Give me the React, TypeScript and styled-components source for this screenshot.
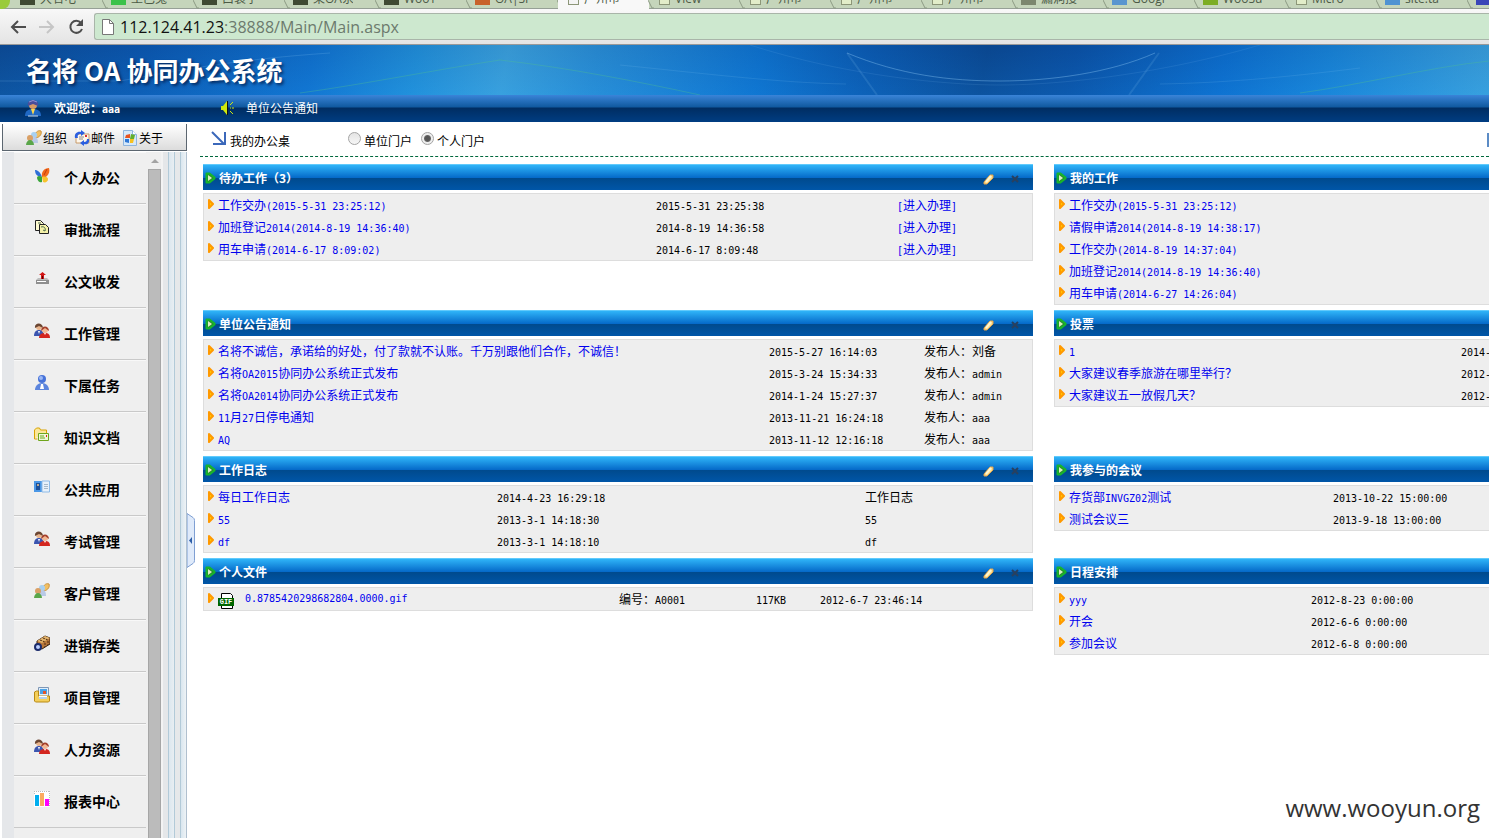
import React from 'react';
import styled, { createGlobalStyle } from 'styled-components';

const CJK = '"Noto Sans CJK SC", sans-serif';
const MONO = '"DejaVu Sans Mono", "Liberation Mono", monospace';

const GlobalStyle = createGlobalStyle`
  * { box-sizing: border-box; }
  body { margin: 0; background: #fff; color: #000; font: 12px/22px ${CJK}; }
  a { color: #00e; text-decoration: none; }
  button { border: 0; padding: 0; background: none; font: inherit; color: inherit; cursor: pointer; }
  svg { display: block; flex: none; }
`;

/* ---------- text with half-width Latin runs ---------- */

const Latin = styled.span`
  font-family: ${MONO};
  font-size: 10px;
  line-height: 1;
  white-space: pre;
`;

const T = ({ children }: { children: string }) => (
  <>
    {children.split(/([\x20-\x7e]+)/).filter(Boolean).map((run, i) =>
      /^[\x20-\x7e]/.test(run) ? <Latin key={i}>{run}</Latin> : run,
    )}
  </>
);

/* ---------- browser chrome ---------- */

const Page = styled.div`
  display: flex;
  flex-direction: column;
  height: 100vh;
  overflow: hidden;
  position: relative;
`;

const TabStrip = styled.div`
  display: flex;
  flex: none;
  height: 9px;
  overflow: hidden;
  background: linear-gradient(#c5d5bb 8px, #96a096 8px);
`;

const TabLead = styled.div`
  flex: none;
  width: 10px;
  height: 9px;
  margin-right: 2px;
  background: #9acb3a;
  border-bottom-right-radius: 8px;
`;

const Tab = styled.div<{ $active?: boolean }>`
  display: flex;
  flex: none;
  align-items: flex-end;
  gap: 5px;
  width: 91px;
  height: 9px;
  padding: 0 0 4px 8px;
  background: ${p => (p.$active ? '#f8f8f8' : 'transparent')};
  color: #4c5a46;
  font: 12px/16px "Open Sans", ${CJK};
  white-space: nowrap;
`;

const TabLabel = styled.span`
  width: 40px;
  margin-bottom: -2px;
  overflow: hidden;
`;

const TabClose = styled.span`
  width: 8px;
  color: #97a48f;
`;

const TabEdge = styled.svg`
  margin: 0 -5px -4px auto;
`;

const Toolbar = styled.div`
  display: flex;
  flex: none;
  align-items: center;
  height: 36px;
  padding: 4px 0 4px 10px;
  gap: 13px;
  background: linear-gradient(#f8f8f8, #e4e4e4);
  border-bottom: 1px solid #999;
`;

const Address = styled.label`
  display: flex;
  flex: 1;
  align-items: center;
  gap: 6px;
  height: 27px;
  margin-left: -3px;
  padding-left: 7px;
  background: #cde8cf;
  border: 1px solid #a9b5a9;
  border-right: 0;
  border-radius: 3px 0 0 3px;
  font: 16px/24px "Open Sans", sans-serif;
  color: #6c7a6d;
`;

const Host = styled.span`
  color: #111;
`;

/* ---------- header ---------- */

const Banner = styled.header`
  position: relative;
  flex: none;
  height: 50px;
  background:
    linear-gradient(rgba(0, 40, 110, 0.12), rgba(20, 140, 235, 0.14)),
    linear-gradient(100deg, #0d4c95 0%, #0c59b0 10%, #1173cf 21%, #2392da 28%, #3ea4dd 34%, #2b90d6 40%, #0f74cf 51%, #0c5cb2 58%, #0b4a93 66%, #0b52a5 72%, #0d6fce 82%, #1a86d8 89%, #3ea4dd 100%);
`;

const BannerArt = styled.svg`
  position: absolute;
  inset: 0;
  width: 100%;
  height: 100%;
`;

const Brand = styled.h1`
  position: relative;
  display: flex;
  gap: 6px;
  margin: 0;
  padding: 6px 0 0 26px;
  color: #fff;
  font: bold 26px/38px ${CJK};
  text-shadow: 2px 2px 3px rgba(0, 20, 60, 0.7);
`;

const WelcomeBar = styled.div`
  display: flex;
  flex: none;
  align-items: center;
  height: 27px;
  padding: 0 0 1px 25px;
  color: #fff;
  background: linear-gradient(#3a84d8 0, #10599f 12px, #002d62 13px, #003d82 100%);
`;

const Welcome = styled.strong`
  width: 167px;
  margin-left: 13px;
`;

const Notice = styled.span`
  margin-left: 12px;
`;

/* ---------- sidebar ---------- */

const Main = styled.div`
  display: flex;
  flex: 1;
  min-height: 0;
  padding-left: 2px;
`;

const Sidebar = styled.aside`
  position: relative;
  display: flex;
  flex: none;
  flex-direction: column;
  width: 185px;
  padding-top: 2px;
`;

const QuickBar = styled.div`
  display: flex;
  flex: none;
  align-items: center;
  gap: 7px;
  height: 27px;
  margin-bottom: 1px;
  padding: 2px 0 0 23px;
  border: 1px solid #5c6670;
  border-top: 0;
  background: linear-gradient(#fff, #dcdcdc);
`;

const QuickButton = styled.button`
  display: flex;
  align-items: center;
  gap: 1px;
  white-space: nowrap;
`;

const SideBody = styled.div`
  display: flex;
  flex: 1;
  min-height: 0;
  padding-left: 12px;
  background: linear-gradient(90deg, #e5e7ea 12px, #efefef 12px);
`;

const Menu = styled.nav`
  flex: none;
  width: 132px;
  overflow: hidden;
`;

const MenuItem = styled.a`
  display: flex;
  align-items: center;
  gap: 14px;
  height: 52px;
  padding: 0 0 2px 20px;
  border-bottom: 1px solid #c9c9c9;
  border-top: 1px solid #f8f8f8;
  color: #000;
  font-size: 14px;
  font-weight: 600;

  svg { margin-bottom: 4px; }
`;

const ScrollTrack = styled.div`
  display: flex;
  flex: none;
  flex-direction: column;
  width: 13px;
  margin-left: 2px;
`;

const ScrollUp = styled.button`
  display: flex;
  justify-content: center;
  align-items: center;
  height: 17px;
`;

const ScrollThumb = styled.div`
  flex: 1;
  background: #bbb;
  border: 1px solid #a6a6a6;
  border-bottom: 0;
`;

const Rails = styled.div`
  flex: 1;
  background: linear-gradient(
    90deg,
    #f3f3f3 2px, #e5e7e9 2px, #e5e7e9 7px, #b2cad8 7px, #b2cad8 8px, #dbe7ef 8px, #e9eef2 13px,
    #b2cad8 13px, #b2cad8 14px, #e6e8ea 14px, #e6e8ea 19px, #b2cad8 19px, #b2cad8 20px,
    #d9e6ef 20px, #eef3f6 25px, #b0c0cf 25px
  );
`;

const Collapse = styled.button`
  position: absolute;
  top: 391px;
  left: 100%;
  width: 8px;
  height: 55px;
`;

/* ---------- desk ---------- */

const Content = styled.main`
  flex: 1;
  min-width: 0;
  overflow: hidden;
  padding-left: 13px;
`;

const DeskBar = styled.div`
  display: flex;
  align-items: center;
  height: 35px;
  padding: 2px 0 0 11px;
  border-bottom: 1px dashed #00683c;
`;

const DeskTitle = styled.span`
  width: 118px;
  margin: 2px 0 0 4px;
`;

const Radio = styled.label`
  display: flex;
  align-items: center;
  gap: 3px;
  margin-right: 9px;
  padding-top: 2px;

  input {
    appearance: none;
    width: 13px;
    height: 13px;
    margin: 0 0 5px;
    border: 1px solid #a4a4a4;
    border-radius: 50%;
    background: linear-gradient(#e4e4e4, #f6f6f6);
  }

  input:checked {
    background: radial-gradient(circle, #555 0 2px, #666 3px, #eee 4px);
  }
`;

const EdgeMark = styled.span`
  width: 2px;
  height: 14px;
  margin-left: auto;
  background: #5b8bc5;
`;

/* The desk is wider than the window; its right part runs out of view. */
const Desk = styled.div`
  display: grid;
  grid-template-columns: 1fr 1fr;
  gap: 5px 21px;
  align-items: start;
  width: calc(100% + 395px);
  padding: 7px 0 0 3px;
`;

const PanelHead = styled.div`
  display: flex;
  align-items: center;
  height: 26px;
  margin-bottom: 3px;
  padding: 2px 13px 0 2px;
  color: #fff;
  background: linear-gradient(#93e0ff 0, #2fb4f8 1px, #0468c8 14px, #004a8d 14px, #0056a8 100%);
`;

const PanelTitle = styled.h2`
  flex: 1;
  margin: 0 0 0 3px;
  font: bold 12px/22px ${CJK};
`;

const HeadButton = styled.button`
  margin: 2px 0 0 17px;
`;

const Table = styled.table`
  width: 100%;
  table-layout: fixed;
  border-collapse: separate;
  border-spacing: 0;
  background: #eee;
  border: 1px solid #ddd;
`;

const Cell = styled.td<{ $w?: number }>`
  width: ${p => (p.$w ? `${p.$w}px` : 'auto')};
  height: 22px;
  padding: 0;
  line-height: 22px;
  white-space: nowrap;
`;

const BulletCell = styled(Cell)`
  padding-left: 4px;
  vertical-align: top;

  svg { margin-top: 5px; }
`;

const FileLink = styled.a`
  display: flex;
  align-items: center;
  gap: 11px;
  height: 22px;

  svg { margin-top: 4px; }
`;

const Watermark = styled.div`
  position: absolute;
  right: 9px;
  bottom: 13px;
  color: #333;
  font: 24px/34px "Open Sans", sans-serif;
`;

/* ---------- icons ---------- */

const Svg = ({ w = 16, h = 16, children }: { w?: number; h?: number; children: React.ReactNode }) => (
  <svg width={w} height={h} viewBox={`0 0 ${w} ${h}`} aria-hidden="true">{children}</svg>
);

const Butterfly = () => (
  <Svg>
    <path d="M8 10C7 5 10 1 15 1c1 3 0 6-2 8-1 1-3 2-5 1z" fill="#f26a1b" />
    <path d="M8 10C6 5 4 3 1 3c0 3 1 5 3 6z" fill="#2f6fd6" />
    <path d="M8 10c-3-2-5-1-5 1 1 4 3 5 5 4z" fill="#3aa53a" />
    <path d="M8 10c3-1 6 0 6 2 0 3-3 4-5 3z" fill="#f7c32c" />
    <path d="M10 8l3-6" stroke="#c33b10" fill="none" />
  </Svg>
);

const Copies = () => (
  <Svg>
    <path d="M1.500 1.500h5l3 3v7h-8z" fill="#fffbd0" stroke="#222" />
    <path d="M5.500 5.500h6l3 3v6h-9z" fill="#f4f1a8" stroke="#222" />
    <path d="M4 4h3M7 8c3-1 5 1 4 4l-2-1" stroke="#4a6a4a" fill="none" />
  </Svg>
);

const Outbox = () => (
  <Svg>
    <path d="M2 9l2-2h9l2 2v3H2z" fill="#bdbdbd" />
    <path d="M2 9h13v4H2z" fill="#8f8f8f" />
    <path d="M3 10h9v1H3z" fill="#fff" />
    <path d="M8.500 1L12 4h-2v4H7V4H5z" fill="#d21414" />
    <path d="M8 5h1v3H8z" fill="#5a0000" />
  </Svg>
);

const People = () => (
  <Svg>
    <circle cx="5" cy="4" r="3" fill="#e8b48c" />
    <path d="M1 5c-1-6 8-6 8 0L5 3z" fill="#6b4632" />
    <path d="M0 13c0-4 2-6 5-6s5 2 5 6z" fill="#3b55b0" />
    <circle cx="11" cy="7" r="3" fill="#f2b793" />
    <path d="M7 8c0-6 8-6 8 0l-4-3z" fill="#a5402c" />
    <path d="M5 15c0-4 3-5 6-5s5 1 5 5z" fill="#d3261f" />
    <path d="M4 8l1 3 1-3zM10 10l1 2 1-2z" fill="#fff" />
  </Svg>
);

const BluePerson = () => (
  <Svg>
    <circle cx="8" cy="4" r="4" fill="#4773d9" />
    <circle cx="7" cy="3" r="2" fill="#9bb8f5" />
    <path d="M1 15c0-4 3-7 7-7s7 3 7 7z" fill="#5c85dd" />
    <path d="M7 9h2l1 5H6z" fill="#fff" />
  </Svg>
);

const Folders = () => (
  <Svg>
    <path d="M.5 11.500V3l2-2h3l1 2h6v3" fill="#fbe79a" stroke="#d9a300" />
    <path d="M.5 3v9h3" stroke="#d9a300" fill="none" />
    <path d="M4.500 6.500h10v7h-10z" fill="#eef9d8" stroke="#6fa51c" />
    <path d="M6 9h4M6 11h5" stroke="#6fa51c" />
    <path d="M12 8h1v2h-1z" fill="#d22" />
  </Svg>
);

const Book = () => (
  <Svg>
    <path d="M0 2h8v11H0z" fill="#4a97e6" />
    <path d="M8 2h7.500v11H8z" fill="#e8f1fa" stroke="#8fbbe8" />
    <path d="M2 4h4v7H2z" fill="#1b4f99" />
    <circle cx="4" cy="6" r="1" fill="#f5c58a" />
    <path d="M10 5.500h4M10 7.500h4M10 9.500h4" stroke="#a8b8c8" />
  </Svg>
);

const Customers = () => (
  <Svg>
    <path d="M8 6c2-5 5-6 7-5 1 3-1 6-5 7z" fill="#f2c063" stroke="#c9923d" />
    <circle cx="8" cy="5" r="3" fill="#a8d0f0" />
    <path d="M5 13c0-4 2-6 4-6s3 2 3 6z" fill="#b9c9e6" />
    <circle cx="4" cy="8" r="3" fill="#d9a066" />
    <path d="M0 15c0-3 2-5 4-5s4 2 4 5z" fill="#5aa64a" />
  </Svg>
);

const Crate = () => (
  <Svg>
    <path d="M3 6l8-5 5 2v6l-8 5-5-2z" fill="#b8773a" stroke="#3a2210" />
    <path d="M3 6l8-5 5 2-8 5z" fill="#e3b46c" />
    <path d="M6 5l5 2M9 3l5 2M11 8v4M14 6v4" stroke="#4a2a12" fill="none" strokeDasharray="2 1" />
    <circle cx="4" cy="12" r="3" fill="#bcd0ff" stroke="#1b2b6b" strokeWidth="2" />
  </Svg>
);

const Project = () => (
  <Svg>
    <path d="M4.500.5h10v10h-10z" fill="#dfeefb" stroke="#7f97b5" />
    <path d="M6 2h7v5H6z" fill="#4aa3e8" />
    <path d="M9 4h3v3H9z" fill="#e2572b" />
    <path d="M.5 14V5l2-1h2v5h11v5l-1 1h-13z" fill="#f4cf5b" stroke="#b98a14" />
    <path d="M5 9h8v3H5z" fill="#fff" />
    <path d="M5 11h8" stroke="#6aa5dd" />
  </Svg>
);

const Bars = () => (
  <Svg>
    <path d="M0 0h16v16H0z" fill="#fff" />
    <path d="M0 .5h16M.5 0v4M15.500 0v16" stroke="#bbb" strokeDasharray="1 1" />
    <path d="M1 4h4v11H1z" fill="#00aeef" />
    <path d="M6 2h4v13H6z" fill="#fbab60" />
    <path d="M11 8h4v7h-4z" fill="#f0f" />
  </Svg>
);

const Mail = () => (
  <Svg>
    <path d="M2 4h13v9H2z" fill="#fff7ea" stroke="#c79a6a" />
    <path d="M5 7h5M5 9h4" stroke="#8a8a8a" />
    <path d="M11 5h2v2h-2z" fill="#d33" />
    <path d="M1 8c-1-5 3-7 6-6V0l4 3-4 3V4C4 4 3 6 4 8z" fill="#2b5fe0" />
    <path d="M15 9c1 4-2 6-5 5v2l-4-3 4-3v2c2 0 3-1 3-3z" fill="#2b5fe0" />
  </Svg>
);

const About = () => (
  <Svg>
    <path d="M1.500.5h9l4 4v11h-13z" fill="#d6e8fa" stroke="#8fb5de" />
    <path d="M10.500.5v4h4" fill="#fff" stroke="#8fb5de" />
    <path d="M4 5l4-1v4H3z" fill="#e8531f" />
    <path d="M9 4l4 1-1 4H8z" fill="#63ae2c" />
    <path d="M3 9h4v4l-4-1z" fill="#2f78d6" />
    <path d="M8 9h4l-1 4H8z" fill="#f7c11f" />
  </Svg>
);

const Officer = () => (
  <Svg h={17}>
    <circle cx="8" cy="5" r="4" fill="#d99b66" />
    <path d="M3 6C1-2 15-2 13 6L8 4z" fill="#4a4d9a" />
    <path d="M4 2q4-3 8 0" stroke="#8f93d8" fill="none" />
    <path d="M0 16c0-5 3-7 8-7s8 2 8 7z" fill="#1f68c4" />
    <path d="M6 9l2 6 2-6z" fill="#ffd84a" />
    <path d="M3 16h10" stroke="#c8d8ea" />
  </Svg>
);

const Speaker = () => (
  <Svg w={13} h={14}>
    <path d="M0 5h2l4-5v14L2 9H0z" fill="#cfe80c" />
    <path d="M6.500 0v14" stroke="#111" />
    <path d="M9 4l3-3M9 7h1M11 7h2M9 10l3 3" stroke="#cfe80c" fill="none" />
  </Svg>
);

const Play = () => (
  <Svg w={11} h={12}>
    <path d="M1.500 1.500h3l5 4v1l-5 4h-3z" fill="#2c8a2c" stroke="#17b62b" strokeWidth="2" strokeLinejoin="round" />
    <path d="M3 3l4 3-4 3z" fill="#d7f0c8" />
  </Svg>
);

const Pencil = () => (
  <Svg w={11} h={11}>
    <path d="M1 8l6-7 3 0 0 3-6 6-3 0z" fill="#fbdc8a" stroke="#e0a24a" />
    <path d="M3 8l5-6" stroke="#fff6d0" strokeWidth="2" />
  </Svg>
);

const Cross = () => (
  <Svg w={9} h={8}>
    <path d="M1 1l6 6M7 1L1 7" stroke="#28405f" strokeWidth="2" />
  </Svg>
);

const Bullet = () => (
  <Svg w={7} h={10}>
    <path d="M1 1l4 4-4 4z" fill="#fc0" stroke="#f90" strokeWidth="2" strokeLinejoin="round" />
  </Svg>
);

const GifFile = () => (
  <Svg w={16} h={16}>
    <path d="M3.500 15.500V.5h9l2 2v13z" fill="#fff" stroke="#000" />
    <path d="M0 5h16v8H0z" fill="#060" />
    <text x="8" y="11" fill="#fff" fontFamily="Liberation Mono" fontSize="7" fontWeight="bold" textAnchor="middle">GIF</text>
  </Svg>
);

/* ---------- data ---------- */

const tabs: { label: string; color: string; outline?: boolean; active?: boolean }[] = [
  { label: '大名电', color: '#3f4a33' },
  { label: '土巴兔', color: '#3bc24a' },
  { label: '口袋字', color: '#3f4a33' },
  { label: '桨OA系', color: '#3f4a33' },
  { label: 'WooY', color: '#3f4a33' },
  { label: 'OA|SI', color: '#c8622c' },
  { label: '广州市', color: '#f4f4f4', outline: true, active: true },
  { label: 'View', color: '#e2edc9', outline: true },
  { label: '广州市', color: '#e2edc9', outline: true },
  { label: '广州市', color: '#e2edc9', outline: true },
  { label: '广州市', color: '#e2edc9', outline: true },
  { label: '漏洞搜', color: '#7c876f' },
  { label: 'Googl', color: '#5a95cf' },
  { label: 'WooSu', color: '#7cad24' },
  { label: 'Micro', color: '#e2edc9', outline: true },
  { label: 'site:ta', color: '#4f93d2' },
  { label: '', color: '#3a46b8' },
];

const Favicon = styled.span<{ $color: string; $outline?: boolean }>`
  flex: none;
  width: ${p => (p.$outline ? 11 : 15)}px;
  height: 15px;
  margin-left: ${p => (p.$outline ? 2 : 0)}px;
  background: ${p => p.$color};
  border: ${p => (p.$outline ? '1px solid #8c9678' : '0')};
`;

const menu: [string, React.FC][] = [
  ['个人办公', Butterfly],
  ['审批流程', Copies],
  ['公文收发', Outbox],
  ['工作管理', People],
  ['下属任务', BluePerson],
  ['知识文档', Folders],
  ['公共应用', Book],
  ['考试管理', People],
  ['客户管理', Customers],
  ['进销存类', Crate],
  ['项目管理', Project],
  ['人力资源', People],
  ['报表中心', Bars],
];

interface PanelData {
  title: string;
  widths: number[];
  rows: string[][];
  file?: boolean;
  linkLast?: boolean;
}

const panels: PanelData[] = [
  {
    title: '待办工作（3）',
    widths: [241, 135],
    linkLast: true,
    rows: [
      ['工作交办(2015-5-31 23:25:12)', '2015-5-31 23:25:38', '[进入办理]'],
      ['加班登记2014(2014-8-19 14:36:40)', '2014-8-19 14:36:58', '[进入办理]'],
      ['用车申请(2014-6-17 8:09:02)', '2014-6-17 8:09:48', '[进入办理]'],
    ],
  },
  {
    title: '我的工作',
    widths: [],
    rows: [
      ['工作交办(2015-5-31 23:25:12)'],
      ['请假申请2014(2014-8-19 14:38:17)'],
      ['工作交办(2014-8-19 14:37:04)'],
      ['加班登记2014(2014-8-19 14:36:40)'],
      ['用车申请(2014-6-27 14:26:04)'],
    ],
  },
  {
    title: '单位公告通知',
    widths: [155, 108],
    rows: [
      ['名将不诚信，承诺给的好处，付了款就不认账。千万别跟他们合作，不诚信！', '2015-5-27 16:14:03', '发布人：刘备'],
      ['名将OA2015协同办公系统正式发布', '2015-3-24 15:34:33', '发布人：admin'],
      ['名将OA2014协同办公系统正式发布', '2014-1-24 15:27:37', '发布人：admin'],
      ['11月27日停电通知', '2013-11-21 16:24:18', '发布人：aaa'],
      ['AQ', '2013-11-12 12:16:18', '发布人：aaa'],
    ],
  },
  {
    title: '投票',
    widths: [422],
    rows: [
      ['1', '2014-'],
      ['大家建议春季旅游在哪里举行？', '2012-'],
      ['大家建议五一放假几天？', '2012-'],
    ],
  },
  {
    title: '工作日志',
    widths: [368, 167],
    rows: [
      ['每日工作日志', '2014-4-23 16:29:18', '工作日志'],
      ['55', '2013-3-1 14:18:30', '55'],
      ['df', '2013-3-1 14:18:10', 'df'],
    ],
  },
  {
    title: '我参与的会议',
    widths: [550],
    rows: [
      ['存货部INVGZ02测试', '2013-10-22 15:00:00'],
      ['测试会议三', '2013-9-18 13:00:00'],
    ],
  },
  {
    title: '个人文件',
    widths: [137, 64, 212],
    file: true,
    rows: [['0.8785420298682804.0000.gif', '编号：A0001', '117KB', '2012-6-7 23:46:14']],
  },
  {
    title: '日程安排',
    widths: [572],
    rows: [
      ['yyy', '2012-8-23 0:00:00'],
      ['开会', '2012-6-6 0:00:00'],
      ['参加会议', '2012-6-8 0:00:00'],
    ],
  },
];

const Panel = ({ data }: { data: PanelData }) => (
  <section>
    <PanelHead>
      <Play />
      <PanelTitle>{data.title}</PanelTitle>
      <HeadButton aria-label="编辑"><Pencil /></HeadButton>
      <HeadButton aria-label="关闭"><Cross /></HeadButton>
    </PanelHead>
    <Table>
      <tbody>
        {data.rows.map((row, r) => (
          <tr key={r}>
            <BulletCell $w={14}><Bullet /></BulletCell>
            {row.map((text, c) => (
              <Cell key={c} $w={c ? data.widths[c - 1] : undefined}>
                {c === 0 && data.file ? (
                  <FileLink href="#"><GifFile /><T>{text}</T></FileLink>
                ) : c === 0 || (data.linkLast && c === row.length - 1) ? (
                  <a href="#"><T>{text}</T></a>
                ) : (
                  <T>{text}</T>
                )}
              </Cell>
            ))}
          </tr>
        ))}
      </tbody>
    </Table>
  </section>
);

export default function App() {
  return (
    <Page>
      <GlobalStyle />
      <TabStrip>
        <TabLead />
        {tabs.map((t, i) => (
          <Tab key={i} $active={t.active}>
            <Favicon $color={t.color} $outline={t.outline} />
            <TabLabel>{t.label}</TabLabel>
            <TabClose>×</TabClose>
            <TabEdge width="6" height="9" viewBox="0 0 6 9" aria-hidden="true">
              <path d="M0 0l4 8h2" stroke="#8c9a84" fill="none" />
            </TabEdge>
          </Tab>
        ))}
      </TabStrip>
      <Toolbar>
        <button aria-label="后退">
          <Svg w={16} h={14}><path d="M8 1L2 7l6 6M2 7h14" stroke="#4d4d4d" strokeWidth="2" fill="none" /></Svg>
        </button>
        <button aria-label="前进">
          <Svg w={16} h={14}><path d="M8 1l6 6-6 6M14 7H0" stroke="#c6c6c6" strokeWidth="2" fill="none" /></Svg>
        </button>
        <button aria-label="刷新">
          <Svg w={16} h={16}>
            <path d="M13 4a6 6 0 1 0 1 6" stroke="#4d4d4d" strokeWidth="2" fill="none" />
            <path d="M15 0v7H8z" fill="#4d4d4d" />
          </Svg>
        </button>
        <Address>
          <Svg w={12} h={16}>
            <path d="M.5.5h7l4 4v11H.5z" fill="#fff" stroke="#777" />
            <path d="M7.500.5v4h4" fill="none" stroke="#777" />
          </Svg>
          <span><Host>112.124.41.23</Host>:38888/Main/Main.aspx</span>
        </Address>
      </Toolbar>

      <Banner>
        <BannerArt viewBox="0 0 1489 50" preserveAspectRatio="none" aria-hidden="true">
          <g fill="none" stroke="#8cc8f4">
            <path d="M847 8C900 30 950 36 1000 36S1110 28 1155 8" strokeOpacity=".4" />
            <path d="M750 0C850 32 950 40 1000 40S1150 32 1260 0" strokeOpacity=".12" />
            <path d="M847 8l30 42M1159 8l-30 42" strokeOpacity=".15" strokeWidth="2" />
            <path d="M620 20c80 8 160 18 226 19M1160 39c60-1 120-6 200-16" strokeOpacity=".15" />
            <path d="M0 36h120C180 25 240 14 330 8" strokeOpacity=".2" />
          </g>
          <path d="M500 15c70 8 140 22 200 35M300 48c60-8 140-24 200-33M1300 48c60-8 130-26 189-32" fill="none" stroke="#4fc08c" strokeOpacity=".35" />
        </BannerArt>
        <Brand><span>名将</span><span>OA</span><span>协同办公系统</span></Brand>
      </Banner>
      <WelcomeBar>
        <Officer />
        <Welcome><T>欢迎您：aaa</T></Welcome>
        <Speaker />
        <Notice>单位公告通知</Notice>
      </WelcomeBar>

      <Main>
        <Sidebar>
          <QuickBar>
            <QuickButton><Customers />组织</QuickButton>
            <QuickButton><Mail />邮件</QuickButton>
            <QuickButton><About />关于</QuickButton>
          </QuickBar>
          <SideBody>
            <Menu>
              {menu.map(([label, Icon]) => (
                <MenuItem key={label} href="#"><Icon />{label}</MenuItem>
              ))}
            </Menu>
            <ScrollTrack>
              <ScrollUp aria-label="向上滚动">
                <Svg w={8} h={4}><path d="M0 4l4-4 4 4z" fill="#a3a3a3" /></Svg>
              </ScrollUp>
              <ScrollThumb />
            </ScrollTrack>
            <Rails />
          </SideBody>
          <Collapse aria-label="收起">
            <Svg w={8} h={55}>
              <path d="M0 .5l6 4q1.500 1 1.500 3v40q0 2-1.500 3l-6 4z" fill="#dfeafa" stroke="#7f9fd3" />
              <path d="M5 24v7l-3-3.500z" fill="#2f5fa8" />
            </Svg>
          </Collapse>
        </Sidebar>

        <Content>
          <DeskBar>
            <Svg w={15} h={18}>
              <path d="M1 1l12 12M14 1v12H2" stroke="#3b68ba" strokeWidth="2" fill="none" />
            </Svg>
            <DeskTitle>我的办公桌</DeskTitle>
            <Radio><input type="radio" name="portal" />单位门户</Radio>
            <Radio><input type="radio" name="portal" defaultChecked />个人门户</Radio>
            <EdgeMark />
          </DeskBar>
          <Desk>
            {panels.map(p => <Panel key={p.title} data={p} />)}
          </Desk>
        </Content>
      </Main>
      <Watermark>www.wooyun.org</Watermark>
    </Page>
  );
}
